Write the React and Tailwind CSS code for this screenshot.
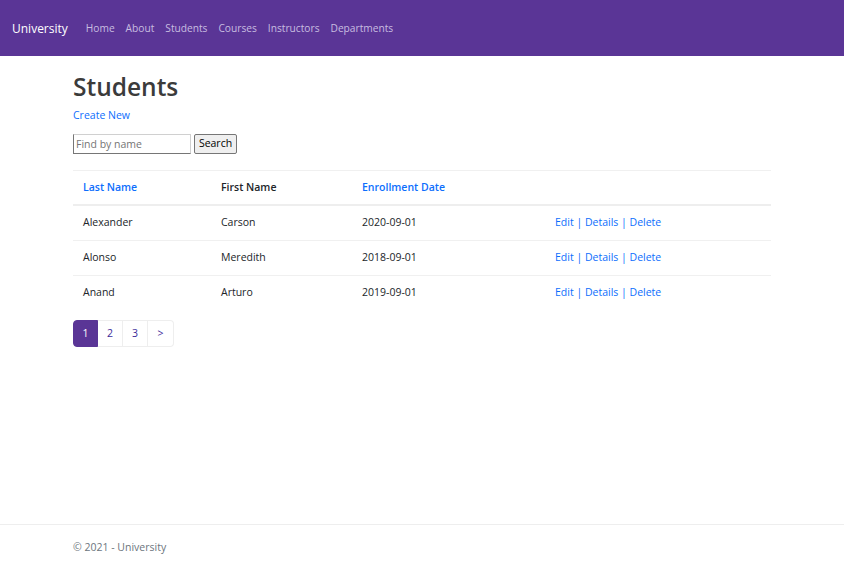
import React from 'react';

const students = [
  { last: 'Alexander', first: 'Carson', date: '2020-09-01' },
  { last: 'Alonso', first: 'Meredith', date: '2018-09-01' },
  { last: 'Anand', first: 'Arturo', date: '2019-09-01' },
];

const navLinks = ['Home', 'About', 'Students', 'Courses', 'Instructors', 'Departments'];

const App = () => {
  return (
    <div className="flex min-h-[570px] flex-col bg-white font-['Open_Sans',sans-serif] text-[#212529]">
      <header className="flex h-[56px] items-center bg-[#5a3596] px-[12px] pt-[2px]">
        <span className="mr-[18px] text-[12px] text-white">University</span>
        <nav className="flex gap-[11px] text-[10.2px] text-[#c8bde0]">
          {navLinks.map((link) => (
            <a key={link} href="#" className="hover:text-white">{link}</a>
          ))}
        </nav>
      </header>

      <main className="mx-auto w-[698px] flex-1 pt-[13px]">
        <h1 className="text-[24.5px] font-semibold leading-[36px] text-[#3b3b3b]">Students</h1>
        <a href="#" className="mt-[3px] block text-[10.5px] text-[#0d6efd]">Create New</a>

        <form className="mt-[10px] flex items-center gap-[3px]" onSubmit={(e) => e.preventDefault()}>
          <input
            type="text"
            placeholder="Find by name"
            className="h-[20px] w-[118px] border border-t-[#d0d0d0] border-r-[#d0d0d0] border-b-[#767676] border-l-[#767676] px-[2px] text-[10.5px] placeholder:text-[#757575]"
          />
          <button type="button" className="h-[20px] w-[43px] rounded-[2px] border border-[#767676] bg-[#efefef] text-[10.5px] text-black">
            Search
          </button>
        </form>

        <table className="mt-[16px] w-full border-collapse text-[10.5px]">
          <thead>
            <tr className="border-t border-[#f0f0f0]">
              <th className="h-[35px] w-[138px] border-b-2 border-[#eeeeee] px-[10px] text-left font-semibold">
                <a href="#" className="text-[#0d6efd]">Last Name</a>
              </th>
              <th className="w-[141px] border-b-2 border-[#eeeeee] px-[10px] text-left font-semibold text-[#212529]">First Name</th>
              <th className="w-[193px] border-b-2 border-[#eeeeee] px-[10px] text-left font-semibold">
                <a href="#" className="text-[#0d6efd]">Enrollment Date</a>
              </th>
              <th className="border-b-2 border-[#eeeeee] px-[10px]" />
            </tr>
          </thead>
          <tbody>
            {students.map((s, i) => (
              <tr key={s.last} className={i < students.length - 1 ? 'border-b border-[#f0f0f0]' : ''}>
                <td className="h-[35px] px-[10px]">{s.last}</td>
                <td className="px-[10px]">{s.first}</td>
                <td className="px-[10px]">{s.date}</td>
                <td className="px-[10px] text-[#0d6efd]">
                  <a href="#">Edit</a> | <a href="#">Details</a> | <a href="#">Delete</a>
                </td>
              </tr>
            ))}
          </tbody>
        </table>

        <ul className="mt-[10px] flex text-[10.5px]">
          <li className="flex h-[27px] w-[25px] items-center justify-center rounded-l-[4px] border border-[#5a3596] bg-[#5a3596] text-white">1</li>
          <li className="flex h-[27px] w-[25px] items-center justify-center border border-l-0 border-[#eeeeee] text-[#3d2b9a]">2</li>
          <li className="flex h-[27px] w-[25px] items-center justify-center border border-l-0 border-[#eeeeee] text-[#3d2b9a]">3</li>
          <li className="flex h-[27px] w-[26px] items-center justify-center rounded-r-[4px] border border-l-0 border-[#eeeeee] text-[#3d2b9a]">&gt;</li>
        </ul>
      </main>

      <footer className="mt-auto h-[46px] border-t border-[#eeeeee]">
        <div className="mx-auto w-[698px] pt-[15px] text-[10.5px] text-[#6c757d]">© 2021 - University</div>
      </footer>
    </div>
  );
};

export default App;
